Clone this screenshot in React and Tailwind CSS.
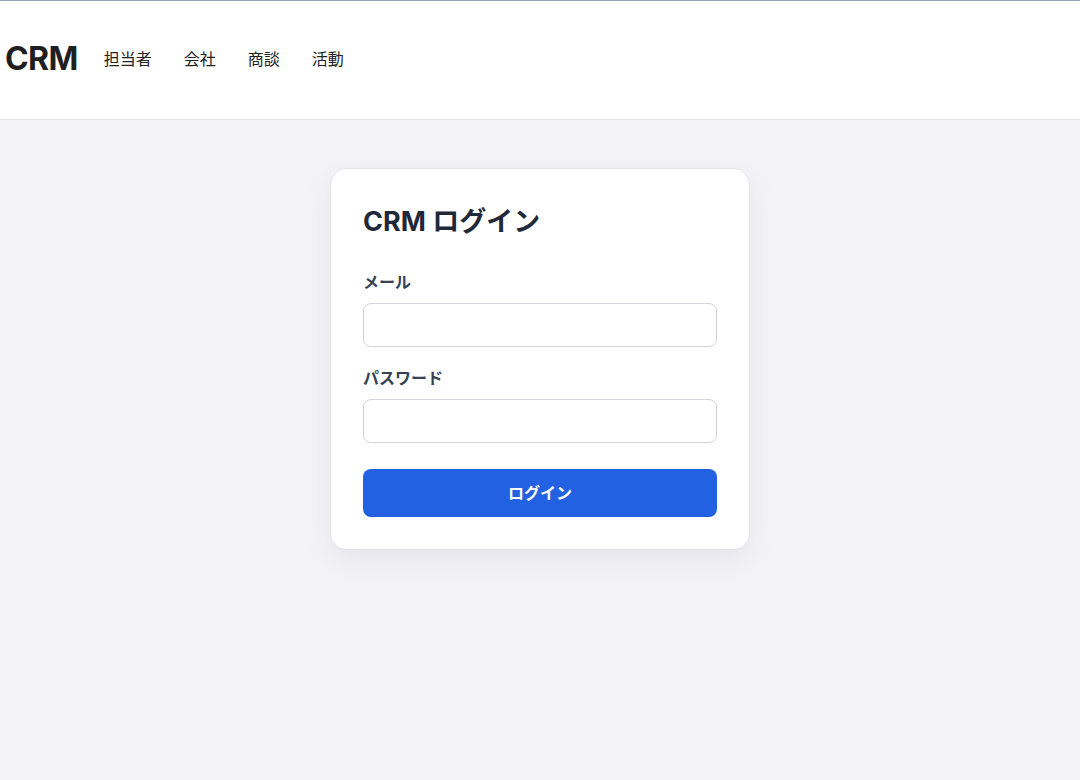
import React, { useState } from 'react';

// ================== NAV ITEMS ======================
const navItems = ['担当者', '会社', '商談', '活動'];

// ================== FIELD ======================
const Field = ({ label, type, value, onChange, last }) => (
  <div className={last ? '' : 'mb-[19px]'}>
    <label className="block mb-[9px] text-[16px] leading-6 font-semibold text-[#374151]">
      {label}
    </label>
    <input
      type={type}
      value={value}
      onChange={(e) => onChange(e.target.value)}
      className="block w-full h-[44px] px-3 rounded-lg border border-[#d1d5db] bg-white text-[16px] text-[#1f2937] focus:outline-none"
    />
  </div>
);

// ================== MAIN PAGE ======================
const App = () => {
  const [email, setEmail] = useState('');
  const [password, setPassword] = useState('');

  return (
    <div
      className="min-h-screen bg-[#f4f4f8]"
      style={{ fontFamily: 'Inter, "Noto Sans CJK JP", sans-serif' }}
    >
      {/* HEADER */}
      <header className="h-[120px] bg-white border-t border-t-[#8aa8ad] border-b border-b-[#e3e3e8] flex items-center pl-[5px] pb-[2px]">
        <div className="text-[32px] font-bold text-[#1f1f1f] tracking-[-0.6px]">CRM</div>
        <nav className="ml-[26px] flex gap-8">
          {navItems.map((item) => (
            <a key={item} href="#" className="text-[16px] text-[#222222]">
              {item}
            </a>
          ))}
        </nav>
      </header>

      {/* LOGIN CARD */}
      <div className="flex justify-center pt-12">
        <div className="w-[420px] bg-white border border-[#e2e4ea] rounded-2xl p-8 shadow-[0_10px_30px_rgba(20,20,60,0.07)]">
          <h1 className="text-[27px] leading-[42px] font-bold text-[#1f2937] mb-[27px]">
            CRM ログイン
          </h1>

          <Field label="メール" type="email" value={email} onChange={setEmail} />
          <Field label="パスワード" type="password" value={password} onChange={setPassword} last />

          <button
            type="button"
            className="mt-[26px] w-full h-[48px] rounded-lg bg-[#2361e3] text-white text-[16px] font-bold"
          >
            ログイン
          </button>
        </div>
      </div>
    </div>
  );
};

export default App;
